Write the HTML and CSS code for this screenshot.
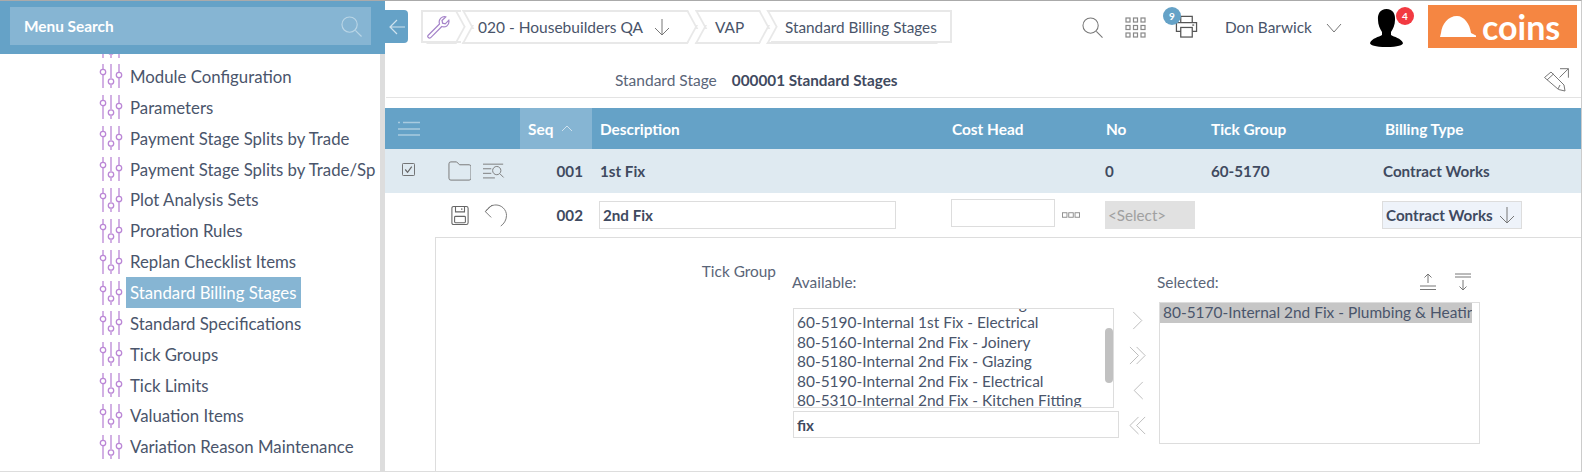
FILE: index.html
```html
<!DOCTYPE html>
<html lang="en">
<head>
  <meta charset="UTF-8"/>
  <title>Standard Billing Stages</title>
  <link rel="stylesheet" href="styles.css">
</head>
<body>
  <svg class="defs" width="0" height="0">
    <symbol id="sliders" viewBox="0 0 24 24">
      <g fill="none" stroke="#bb87d6" stroke-width="1.3">
        <path d="M4 0v5M4 11v13M12 0v14M12 21v3M20 0v8M20 14v10"/>
        <circle cx="4" cy="8" r="2.7"/>
        <circle cx="12" cy="17.5" r="2.7"/>
        <circle cx="20" cy="11" r="2.7"/>
      </g>
    </symbol>
  </svg>

  <div class="app">
    <aside class="sidebar">
      <div class="menu-head">
        <div class="menu-search">
          <span>Menu Search</span>
          <svg viewBox="0 0 22 22" width="21" height="21"><circle cx="9" cy="9" r="8" fill="none" stroke="#b9d5e6" stroke-width="1.2"/><path d="M15 15l6.500 6.500" stroke="#b9d5e6" stroke-width="1.2"/></svg>
        </div>
      </div>
      <div class="menu-wrap">
        <ul class="menu">
          <li class="menu-item"><svg class="slider"><use href="#sliders"/></svg></li>
          <li class="menu-item"><svg class="slider"><use href="#sliders"/></svg><span>Module Configuration</span></li>
          <li class="menu-item"><svg class="slider"><use href="#sliders"/></svg><span>Parameters</span></li>
          <li class="menu-item"><svg class="slider"><use href="#sliders"/></svg><span>Payment Stage Splits by Trade</span></li>
          <li class="menu-item"><svg class="slider"><use href="#sliders"/></svg><span>Payment Stage Splits by Trade/Sp</span></li>
          <li class="menu-item"><svg class="slider"><use href="#sliders"/></svg><span>Plot Analysis Sets</span></li>
          <li class="menu-item"><svg class="slider"><use href="#sliders"/></svg><span>Proration Rules</span></li>
          <li class="menu-item"><svg class="slider"><use href="#sliders"/></svg><span>Replan Checklist Items</span></li>
          <li class="menu-item active"><svg class="slider"><use href="#sliders"/></svg><span>Standard Billing Stages</span></li>
          <li class="menu-item"><svg class="slider"><use href="#sliders"/></svg><span>Standard Specifications</span></li>
          <li class="menu-item"><svg class="slider"><use href="#sliders"/></svg><span>Tick Groups</span></li>
          <li class="menu-item"><svg class="slider"><use href="#sliders"/></svg><span>Tick Limits</span></li>
          <li class="menu-item"><svg class="slider"><use href="#sliders"/></svg><span>Valuation Items</span></li>
          <li class="menu-item"><svg class="slider"><use href="#sliders"/></svg><span>Variation Reason Maintenance</span></li>
        </ul>
      </div>
    </aside>

    <main class="main">
      <header class="topbar">
        <button class="back"><svg viewBox="0 0 18 18" width="18" height="18"><path d="M17 9H2M9 2L2 9l7 7" fill="none" stroke="#cfe2ee" stroke-width="1.2"/></svg></button>
        <nav class="crumbs">
          <div class="crumb first"><svg viewBox="0 0 24 24" width="24" height="24"><path d="M2 20.500L13.500 9c-1-3 .5-6 3-7 1.200-.4 2.300-.4 3.200-.1l-3.700 3.600 .6 2.700 2.700.6 3.500-3.600c.5 2.300-.2 4.400-2 5.700-1.600 1.100-3.300 1.200-5 .6L4.500 22.800c-1.500 1-3.500-1-2.500-2.300z" fill="none" stroke="#a583c9" stroke-width="1.2"/></svg></div>
          <div class="crumb project"><span>020 - Housebuilders QA</span><svg viewBox="0 0 16 18" width="16" height="18"><path d="M8 1v16M1 10l7 7 7-7" fill="none" stroke="#777" stroke-width="1"/></svg></div>
          <div class="crumb vap"><span>VAP</span></div>
          <div class="crumb page"><span>Standard Billing Stages</span></div>
        </nav>
        <div class="tools">
          <svg class="t-search" viewBox="0 0 22 22" width="21" height="21"><circle cx="9" cy="9" r="8" fill="none" stroke="#777" stroke-width="1.1"/><path d="M15 15l6.500 6.500" stroke="#777" stroke-width="1.1"/></svg>
          <svg class="t-grid" viewBox="0 0 21 21" width="21" height="21" fill="none" stroke="#888" stroke-width="1.2">
            <rect x="1" y="1" width="4" height="4"/><rect x="8.500" y="1" width="4" height="4"/><rect x="16" y="1" width="4" height="4"/>
            <rect x="1" y="8.500" width="4" height="4"/><rect x="8.500" y="8.500" width="4" height="4"/><rect x="16" y="8.500" width="4" height="4"/>
            <rect x="1" y="16" width="4" height="4"/><rect x="8.500" y="16" width="4" height="4"/><rect x="16" y="16" width="4" height="4"/>
          </svg>
          <div class="printer">
            <svg viewBox="0 0 24 24" width="23" height="23" fill="none" stroke="#555" stroke-width="1.3"><path d="M6 8V1.500h12V8M6 17H1.500V8h21v9H18"/><rect x="6" y="13" width="12" height="10"/><path d="M18 10.500h2"/></svg>
            <span class="badge blue">9</span>
          </div>
          <div class="user">Don Barwick</div>
          <svg class="t-chev" viewBox="0 0 16 10" width="16" height="10"><path d="M1 1l7 8 7-8" fill="none" stroke="#777" stroke-width="1"/></svg>
          <div class="avatar">
            <svg viewBox="0 0 33 38" width="33" height="38"><path d="M16.500 0C23 0 25.500 5 25 11c0 5-2 9-4 12v3c3 2 10 3 12 8 0 2-5 4-16.500 4S0 36 0 34c2-5 9-6 12-8v-3c-2-3-4-7-4-12C7.500 5 10 0 16.500 0z" fill="#000"/></svg>
            <span class="badge red">4</span>
          </div>
          <div class="logo">
            <svg viewBox="0 0 36 21" width="36" height="21"><path d="M0 21l1-4C2 8 8 0 17 0c7 0 13 8 14 17l5 2.500V21z" fill="#fff"/></svg>
            <span>coins</span>
          </div>
        </div>
      </header>

      <div class="stage-bar">
        <span class="stage-label">Standard Stage</span>
        <span class="stage-value">000001 Standard Stages</span>
        <svg class="edit-ico" viewBox="0 0 25 25" width="25" height="25" fill="none" stroke="#777" stroke-width="1"><path d="M.5 10.500L7 5l13 13 1 6-6.500-1.500zM3 13l6.500-6M16 18l-2 4M16 1.700h8.400v9M24.400 1.700L15.500 10.500"/></svg>
      </div>

      <div class="grid-head row">
        <div class="cell-tools"><svg viewBox="0 0 22 15" width="22" height="15" fill="none" stroke="#a9cbe0" stroke-width="1.3"><path d="M5 1.500h17M0 8h22M0 14h22M0 1.500h2"/></svg></div>
        <div class="cell-seq sorted">Seq <svg viewBox="0 0 12 7" width="12" height="7"><path d="M1 6l5-5 5 5" fill="none" stroke="#cfe2ee" stroke-width="1"/></svg></div>
        <div class="cell-desc">Description</div>
        <div class="cell-cost">Cost Head</div>
        <div class="cell-no">No</div>
        <div class="cell-tick">Tick Group</div>
        <div class="cell-type">Billing Type</div>
      </div>

      <div class="grid-row row selected">
        <div class="cell-tools">
          <svg class="check" viewBox="0 0 14 14" width="13" height="13" fill="none" stroke="#666"><rect x=".5" y=".5" width="13" height="13" rx="1"/><path d="M3.500 7l2.500 3 4.500-6" stroke-width="1.3"/></svg>
          <svg class="folder" viewBox="0 0 24 20" width="23" height="20" fill="none" stroke="#777" stroke-width="1"><path d="M1 2.500q0-2 2-2h6l3 3h10q2 0 2 2v12q0 2-2 2H3q-2 0-2-2z"/></svg>
          <svg class="find" viewBox="0 0 24 18" width="22" height="17" fill="none" stroke="#777" stroke-width="1"><path d="M0 1h22M0 6h9M0 11h9M0 16h13"/><circle cx="15" cy="8" r="4.500"/><path d="M18.500 11.500l4 4"/></svg>
        </div>
        <div class="cell-seq num">001</div>
        <div class="cell-desc">1st Fix</div>
        <div class="cell-cost"></div>
        <div class="cell-no">0</div>
        <div class="cell-tick">60-5170</div>
        <div class="cell-type">Contract Works</div>
      </div>

      <div class="grid-row row edit">
        <div class="cell-tools">
          <svg class="save" viewBox="0 0 20 22" width="18" height="21" fill="none" stroke="#666" stroke-width="1.2"><path d="M1 3q0-2 2-2h14q2 0 2 2v16q0 2-2 2H3q-2 0-2-2z"/><path d="M5 1v6h10V1M12 3v2"/><rect x="4" y="12" width="12" height="7" rx="1"/></svg>
          <svg class="undo" viewBox="0 0 26 24" width="26" height="23" fill="none" stroke="#777" stroke-width="1"><path d="M3 8C6 3 10 1 14 1c6 0 11 5 11 11 0 5-3 9-6 11"/><path d="M10 1L3 8l6 6"/></svg>
        </div>
        <div class="cell-seq num">002</div>
        <div class="cell-desc"><input class="field desc-field" type="text" value="2nd Fix"></div>
        <div class="cell-cost">
          <input class="field cost-field" type="text">
          <svg class="dots" viewBox="0 0 20 6" width="18" height="6" fill="none" stroke="#888"><rect x=".5" y=".5" width="5" height="5"/><rect x="7.500" y=".5" width="5" height="5"/><rect x="14.500" y=".5" width="5" height="5"/></svg>
        </div>
        <div class="cell-no"><div class="select-off">&lt;Select&gt;</div></div>
        <div class="cell-tick"></div>
        <div class="cell-type"><div class="type-select">Contract Works <svg viewBox="0 0 16 18" width="16" height="18"><path d="M8 1v16M1 10l7 7 7-7" fill="none" stroke="#777" stroke-width="1"/></svg></div></div>
      </div>

      <section class="detail">
        <div class="detail-label">Tick Group</div>
        <div class="available">
          <div class="pick-label">Available:</div>
          <div class="listbox">
            <div class="list-track"><div class="list-thumb"></div></div>
            <div class="list-inner">
              <div>60-5180-Internal 1st Fix - Glazing</div>
              <div>60-5190-Internal 1st Fix - Electrical</div>
              <div>80-5160-Internal 2nd Fix - Joinery</div>
              <div>80-5180-Internal 2nd Fix - Glazing</div>
              <div>80-5190-Internal 2nd Fix - Electrical</div>
              <div>80-5310-Internal 2nd Fix - Kitchen Fitting</div>
            </div>
          </div>
          <input class="field filter" type="text" value="fix">
        </div>
        <div class="movers">
          <svg viewBox="0 0 12 20" width="12" height="19"><path d="M1 1l9 9-9 9"/></svg>
          <svg viewBox="0 0 20 20" width="19" height="19"><path d="M1 1l9 9-9 9M8 1l9 9-9 9"/></svg>
          <svg viewBox="0 0 12 20" width="12" height="19"><path d="M11 1l-9 9 9 9"/></svg>
          <svg viewBox="0 0 20 20" width="19" height="19"><path d="M10 1l-9 9 9 9M17 1l-9 9 9 9"/></svg>
        </div>
        <div class="chosen">
          <div class="chosen-head">
            <div class="pick-label">Selected:</div>
            <svg viewBox="0 0 18 18" width="18" height="18" fill="none" stroke="#777"><path d="M9 1v9M5.500 4.500L9 1l3.500 3.500M1 13h16M1 16.500h16"/></svg>
            <svg viewBox="0 0 18 18" width="18" height="18" fill="none" stroke="#777"><path d="M9 7v10M5.500 13.500L9 17l3.500-3.500M1 1h16M1 4h16"/></svg>
          </div>
          <div class="listbox chosen-box"><div class="chosen-item">80-5170-Internal 2nd Fix - Plumbing &amp; Heating</div></div>
        </div>
      </section>
    </main>
  </div>
</body>
</html>
```

FILE: styles.css
```css
* {
  box-sizing: border-box;
}
html, body {
  margin: 0;
  height: 100%;
  overflow: hidden;
}
body {
  background-color: #fff;
  color: #49546a;
  font-family: Lato, "Open Sans", sans-serif;
  font-size: 15.4px;
}
.defs {
  display: block;
  height: 0;
}
.app {
  display: flex;
  width: 1582px;
  height: 472px;
  border-top: 1px solid #aaa;
  border-right: 1px solid #ccc;
  border-bottom: 1px solid #ddd;
}

/* sidebar */
.sidebar {
  width: 385px;
  flex-shrink: 0;
  display: flex;
  flex-direction: column;
}
.menu-head {
  flex-shrink: 0;
  height: 53px;
  padding: 6px 14px 8px 10px;
  background-color: #65a2c7;
}
.menu-search {
  height: 38px;
  padding: 0 9px 0 14px;
  display: flex;
  align-items: center;
  justify-content: space-between;
  background-color: #86b5d3;
  color: #fff;
  font-weight: 700;
}
.menu-wrap {
  flex: 1;
  overflow: hidden;
  border-right: 5px solid #ddd;
}
.menu {
  list-style: none;
  margin: -23.8px 0 0;
  padding: 0 0 0 99px;
}
.menu-item {
  height: 30.87px;
  display: flex;
  align-items: center;
  white-space: nowrap;
  color: #4a556b;
  font-size: 16.8px;
}
.slider {
  width: 24px;
  height: 24px;
  flex-shrink: 0;
  margin-right: 7px;
}
.menu-item.active span {
  margin-left: -4px;
  padding: 0 4px;
  line-height: 31px;
  background-color: #86b5d3;
  color: #fff;
}

/* main */
.main {
  flex: 1;
  min-width: 0;
  display: flex;
  flex-direction: column;
}
.topbar {
  height: 53px;
  flex-shrink: 0;
  display: flex;
  align-items: flex-start;
}
.back {
  width: 23px;
  height: 33px;
  margin-top: 9px;
  padding: 0;
  border: none;
  border-radius: 0 4px 4px 0;
  background-color: #65a2c7;
  display: flex;
  align-items: center;
  justify-content: center;
}
.crumbs {
  display: flex;
  height: 33px;
  margin: 9px 0 0 13px;
}
.crumb {
  position: relative;
  height: 33px;
  display: flex;
  align-items: center;
  gap: 11px;
}
.crumb span, .crumb svg {
  position: relative;
  z-index: 1;
}
.crumb::before, .crumb::after {
  content: "";
  position: absolute;
  left: 0;
  right: 0;
  height: 50%;
  border: 2px solid #e8e8e8;
}
.crumb::before {
  top: 0;
  border-bottom: none;
  transform: skewX(28.6deg);
}
.crumb::after {
  bottom: 0;
  border-top: none;
  transform: skewX(-28.6deg);
}
.first {
  width: 40px;
  padding-left: 3px;
  border: 2px solid #e8e8e8;
  border-right: none;
}
.first::before, .first::after {
  left: 8px;
  right: 0;
  border-left: none;
}
.first::before {
  top: -2px;
}
.first::after {
  bottom: -2px;
}
.project {
  width: 226px;
  margin-left: 6px;
  padding-left: 11px;
  font-size: 15.5px;
}
.vap {
  width: 65px;
  margin-left: 7px;
  padding-left: 15px;
}
.page {
  width: 181px;
  margin-left: 6px;
  padding-left: 14px;
  font-size: 15.3px;
  border: 2px solid #e8e8e8;
  border-left: none;
}
.page::before, .page::after {
  right: 8px;
  border-right: none;
}
.page::before {
  top: -2px;
}
.page::after {
  bottom: -2px;
}
.tools {
  flex: 1;
  display: flex;
  align-items: flex-start;
}
.t-search {
  margin: 16px 0 0 130px;
}
.t-grid {
  margin: 16px 0 0 22px;
}
.printer {
  position: relative;
  margin: 14px 0 0 29px;
}
.badge {
  position: absolute;
  width: 18px;
  height: 18px;
  border-radius: 50%;
  display: flex;
  align-items: center;
  justify-content: center;
  color: #fff;
  font-size: 10px;
  font-weight: 700;
}
.badge.blue {
  top: -8px;
  left: -12px;
  background-color: #65a2c7;
}
.badge.red {
  top: -2px;
  right: -11px;
  background-color: #f23a41;
}
.user {
  margin: 17px 0 0 27px;
}
.t-chev {
  margin: 22px 0 0 14px;
}
.avatar {
  position: relative;
  margin: 8px 0 0 28px;
}
.logo {
  width: 149px;
  height: 43px;
  margin: 4px 0 0 25px;
  padding-left: 12px;
  display: flex;
  align-items: center;
  gap: 6px;
  background-color: #f58642;
  color: #fff;
  font-size: 34px;
  font-weight: 700;
  line-height: 43px;
}
.stage-bar {
  height: 44px;
  flex-shrink: 0;
  margin-left: 1px;
  padding: 8px 12px 0 229px;
  display: flex;
  align-items: center;
  border-bottom: 1px solid #e3e3e3;
}
.stage-label {
  color: #5a6578;
  font-size: 15.5px;
}
.stage-value {
  margin-left: 15px;
  font-weight: 700;
  font-size: 15.3px;
  color: #3f4a60;
}
.edit-ico {
  margin-left: auto;
}

/* table */
.row {
  display: grid;
  grid-template-columns: 135px 72px 350px 154px 105px 145px 1fr;
  align-items: center;
  flex-shrink: 0;
}
.grid-head {
  height: 41px;
  margin-top: 10px;
  background-color: #65a2c7;
  color: #fff;
  font-weight: 700;
}
.grid-head > div {
  height: 100%;
  display: flex;
  align-items: center;
  padding-left: 10px;
}
.grid-head .cell-tools {
  padding-left: 13px;
}
.grid-head .cell-desc {
  padding-left: 8px;
}
.grid-head .cell-type {
  padding-left: 39px;
}
.grid-head .sorted {
  gap: 8px;
  padding-left: 8px;
  background-color: #86b5d3;
}
.grid-row {
  height: 44px;
  font-size: 15.2px;
  color: #3f4a60;
}
.grid-row .cell-desc {
  padding-left: 7px;
}
.grid-row .cell-cost {
  padding-left: 9px;
  display: flex;
  align-items: center;
  gap: 7px;
}
.grid-row .cell-no {
  padding-left: 9px;
}
.grid-row .cell-tick {
  padding-left: 10px;
}
.grid-row .cell-type {
  padding-left: 36px;
}
.selected {
  background-color: #dfeaf1;
  font-weight: 700;
}
.selected .cell-desc {
  padding-left: 8px;
}
.selected .cell-type {
  padding-left: 37px;
}
.cell-tools {
  display: flex;
  align-items: center;
}
.check {
  margin: 0 0 3px 17px;
}
.folder {
  margin-left: 33px;
}
.find {
  margin-left: 12px;
}
.save {
  margin-left: 66px;
}
.undo {
  margin-left: 13px;
}
.num {
  text-align: right;
  padding-right: 9px;
  font-weight: 700;
}
.field {
  height: 28px;
  border: 1px solid #ddd;
  background-color: #fff;
  color: #3f4a60;
  font-family: inherit;
  font-size: 15.2px;
  font-weight: 700;
  padding: 0 3px;
}
.desc-field {
  width: 297px;
}
.cost-field {
  width: 104px;
  margin-bottom: 4px;
}
.select-off {
  width: 90px;
  height: 28px;
  padding-left: 3px;
  display: flex;
  align-items: center;
  background-color: #e1e1e1;
  color: #a0a0a0;
  font-weight: 400;
}
.type-select {
  width: 140px;
  height: 28px;
  padding-left: 3px;
  display: flex;
  align-items: center;
  gap: 6px;
  background-color: #eef3fa;
  border: 1px solid #ddd;
  font-weight: 700;
  white-space: nowrap;
}

/* tick group picker */
.detail {
  flex: 1;
  margin-left: 50px;
  display: flex;
  align-items: flex-start;
  border-left: 1px solid #ddd;
  border-top: 1px solid #ddd;
}
.detail-label {
  width: 340px;
  margin-top: 24px;
  text-align: right;
  color: #5a6578;
}
.available {
  width: 327px;
  margin-left: 16px;
}
.pick-label {
  color: #5a6578;
  line-height: 18px;
}
.available .pick-label {
  margin: 35px 0 0 0;
  height: 35px;
}
.listbox {
  border: 1px solid #ddd;
  overflow: hidden;
  white-space: nowrap;
  color: #4a556b;
  font-size: 15.45px;
  line-height: 19.5px;
}
.available .listbox {
  width: 321px;
  height: 100px;
  margin-left: 1px;
}
.list-inner {
  margin-top: -15.25px;
  padding-left: 3px;
}
.list-track {
  float: right;
  width: 8px;
  height: 100%;
}
.list-thumb {
  width: 8px;
  height: 55px;
  margin-top: 19px;
  background-color: #c1c1c1;
  border-radius: 4px;
}
.filter {
  display: block;
  width: 326px;
  margin: 3px 0 0 1px;
  height: 27px;
}
.movers {
  width: 38px;
  margin-top: 73px;
  display: flex;
  flex-direction: column;
  align-items: center;
  gap: 16px;
}
.movers svg {
  fill: none;
  stroke: #bbb;
  stroke-width: 1;
}
.chosen {
  width: 323px;
  margin-top: 35px;
}
.chosen-head {
  height: 29px;
  display: flex;
  align-items: flex-start;
  gap: 17px;
  padding-right: 8px;
}
.chosen-head .pick-label {
  flex: 1;
}
.chosen-box {
  height: 142px;
  margin-left: 2px;
  padding-right: 7px;
}
.chosen-item {
  height: 20px;
  padding-left: 3px;
  overflow: hidden;
  background-color: #c6c6c6;
}
```
